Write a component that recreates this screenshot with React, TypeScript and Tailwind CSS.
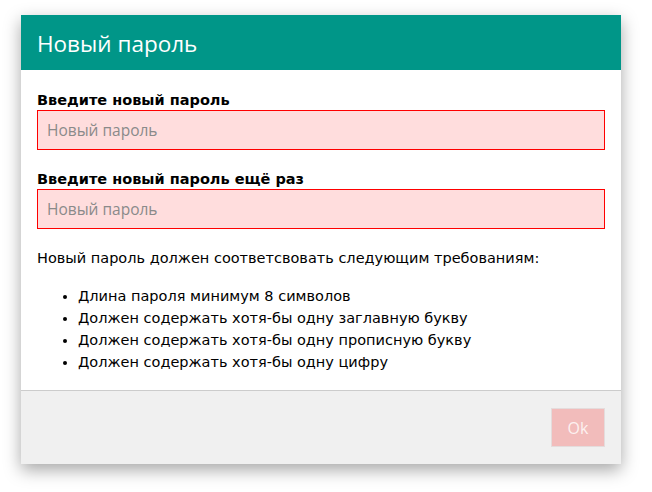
const rules = [
  "Длина пароля минимум 8 символов",
  "Должен содержать хотя-бы одну заглавную букву",
  "Должен содержать хотя-бы одну прописную букву",
  "Должен содержать хотя-бы одну цифру",
];

const Field = ({ label }: { label: string }) => (
  <div className="flex flex-col">
    <label className="text-[14.5px] leading-[17px] font-bold text-black">{label}</label>
    <input
      type="password"
      placeholder="Новый пароль"
      className="mt-[1px] h-[40px] w-full border border-[#ff0000] bg-[#ffdddd] px-[9px] text-[15.5px] font-['Open_Sans',sans-serif] text-black outline-none placeholder:text-[#8a8a8a]"
    />
  </div>
);

export default function App() {
  return (
    <div className="min-h-[492px] w-[652px] bg-white pt-[15px] pl-[21px] font-['DejaVu_Sans',Verdana,sans-serif]">
      <div className="flex w-[600px] flex-col bg-white shadow-[0_6px_16px_rgba(0,0,0,0.35)]">
        <div className="flex h-[55px] items-center bg-[#009688] px-[16px] pt-[2px]">
          <h1 className="font-['Open_Sans',sans-serif] text-[22.5px] font-normal text-white">
            Новый пароль
          </h1>
        </div>
        <div className="flex flex-col px-[16px] pt-[22px] pb-[17px]">
          <div className="flex flex-col gap-[21px]">
            <Field label="Введите новый пароль" />
            <Field label="Введите новый пароль ещё раз" />
          </div>
          <p className="mt-[21px] text-[14.5px] leading-[17px] text-black">
            Новый пароль должен соответсвовать следующим требованиям:
          </p>
          <ul className="mt-[18px] list-disc pl-[41px] text-[14.5px] leading-[22px] text-black">
            {rules.map((r) => (
              <li key={r}>{r}</li>
            ))}
          </ul>
        </div>
        <div className="flex h-[74px] items-center justify-end border-t border-[#cccccc] bg-[#f0f0f0] px-[16px]">
          <button
            disabled
            className="h-[39px] w-[54px] border border-[#e4dcdc] bg-[#f2bcbb] font-['Open_Sans',sans-serif] text-[16px] text-[#fdf1f0]"
          >
            Ok
          </button>
        </div>
      </div>
    </div>
  );
}
